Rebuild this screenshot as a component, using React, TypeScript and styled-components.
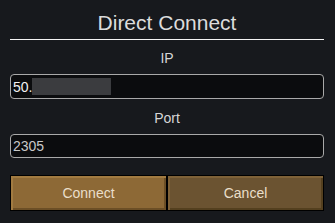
import styled, { createGlobalStyle } from "styled-components";

const Global = createGlobalStyle`
  html, body {
    margin: 0;
    padding: 0;
    background-color: #17191d;
  }
  body {
    font-family: "Liberation Sans", Arial, sans-serif;
  }
`;

export default function App() {
  return (
    <>
      <Global />
      <Dialog>
        <Title>Direct Connect</Title>
        <Label>IP</Label>
        <Field>
          50.
          <Redacted />
        </Field>
        <Label $top={11}>Port</Label>
        <Field $height={24} $muted>
          2305
        </Field>
        <Buttons>
          <Button>Connect</Button>
          <Button $dim>Cancel</Button>
        </Buttons>
      </Dialog>
    </>
  );
}

const Dialog = styled.div`
  width: 314px;
  margin-left: 10px;

  display: flex;
  flex-direction: column;
`;

const Title = styled.div`
  height: 29px;
  padding-top: 10px;

  border-bottom: 1px solid #f4f4f4;

  color: #dcdcdc;
  font-size: 21px;
  line-height: 26px;
  text-align: center;
`;

const Label = styled.div<{ $top?: number }>`
  margin-top: ${(p) => p.$top ?? 10}px;
  height: 16px;

  color: #d6d6d6;
  font-size: 14px;
  line-height: 16px;
  text-align: center;
`;

const Field = styled.div<{ $height?: number; $muted?: boolean }>`
  margin-top: 8px;
  height: ${(p) => p.$height ?? 25}px;
  box-sizing: border-box;
  padding: 0 2px;

  display: flex;
  align-items: center;

  background-color: #0b0c0e;
  border: 1px solid #a9a9a9;
  border-radius: 4px;

  color: ${(p) => (p.$muted ? "#c8c8c8" : "#f2f2f2")};
  font-size: 14px;
`;

const Redacted = styled.span`
  width: 79px;
  height: 17px;
  background-color: #3b3c3f;
`;

const Buttons = styled.div`
  margin-top: 17px;
  height: 36px;

  display: grid;
  grid-template-columns: 1fr 1fr;
`;

const Button = styled.div<{ $dim?: boolean }>`
  display: flex;
  align-items: center;
  justify-content: center;

  border: 1px solid #000;
  background-color: ${(p) => (p.$dim ? "#6b5331" : "#8d6936")};
  box-shadow: ${(p) =>
    p.$dim
      ? "inset 2px 2px 0 #7f6238, inset -2px -2px 0 #54401f"
      : "inset 2px 2px 0 #a27b41, inset -2px -2px 0 #6c4f26"};

  color: #eadfca;
  font-size: 14px;
`;
